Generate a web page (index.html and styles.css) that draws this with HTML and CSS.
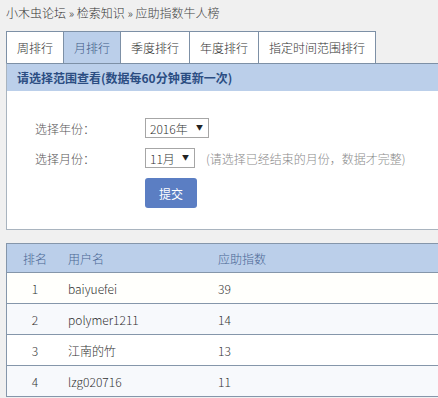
FILE: index.html
```html
<!DOCTYPE html>
<html lang="zh-CN">
<head>
    <meta charset="UTF-8">
    <meta name="viewport" content="width=device-width, initial-scale=1.0">
    <title>应助指数牛人榜</title>
    <link rel="stylesheet" href="styles.css">
</head>
<body>

    <div class="crumbs">
        <a href="#">小木虫论坛</a> » <a href="#">检索知识</a> » <span>应助指数牛人榜</span>
    </div>

    <div class="tabs">
        <div class="tab">周排行</div>
        <div class="tab active">月排行</div>
        <div class="tab">季度排行</div>
        <div class="tab">年度排行</div>
        <div class="tab">指定时间范围排行</div>
    </div>

    <div class="panel">
        <div class="panel-title">请选择范围查看(数据每60分钟更新一次)</div>
        <form class="range-form">
            <div class="form-row">
                <label class="form-label">选择年份：</label>
                <div class="select-wrap year">
                    <select>
                        <option>2016年</option>
                        <option>2015年</option>
                    </select>
                    <span class="caret">▼</span>
                </div>
            </div>
            <div class="form-row">
                <label class="form-label">选择月份：</label>
                <div class="select-wrap month">
                    <select>
                        <option>11月</option>
                        <option>10月</option>
                    </select>
                    <span class="caret">▼</span>
                </div>
                <span class="hint">(请选择已经结束的月份，数据才完整)</span>
            </div>
            <div class="form-row btn-row">
                <span class="form-label"></span>
                <button type="button" class="submit">提交</button>
            </div>
        </form>
    </div>

    <table class="rank">
        <thead>
            <tr>
                <th class="col-rank">排名</th>
                <th class="col-user">用户名</th>
                <th>应助指数</th>
            </tr>
        </thead>
        <tbody>
            <tr class="first">
                <td class="col-rank">1</td>
                <td class="col-user">baiyuefei</td>
                <td>39</td>
            </tr>
            <tr class="alt">
                <td class="col-rank">2</td>
                <td class="col-user">polymer1211</td>
                <td>14</td>
            </tr>
            <tr>
                <td class="col-rank">3</td>
                <td class="col-user">江南的竹</td>
                <td>13</td>
            </tr>
            <tr class="alt">
                <td class="col-rank">4</td>
                <td class="col-user">lzg020716</td>
                <td>11</td>
            </tr>
        </tbody>
    </table>

</body>
</html>
```

FILE: styles.css
```css
body {
    margin: 0;
    padding: 0 0 0 6px;
    background-color: #f0f0f0;
    font-family: "Noto Sans CJK SC", "Noto Sans", sans-serif;
    font-size: 12px;
    font-weight: 300;
    color: #333;
    overflow: hidden;
}
a {
    color: #333;
    text-decoration: none;
}
.crumbs {
    height: 26px;
    line-height: 26px;
    font-size: 12px;
    color: #444;
}
.tabs {
    display: flex;
    margin-top: 5px;
}
.tab {
    height: 31px;
    line-height: 31px;
    padding: 0 10px;
    background-color: #fff;
    border: 1px solid #7d90a6;
    border-bottom: none;
    margin-right: -1px;
    color: #333;
    font-size: 12px;
}
.tab.active {
    background-color: #bbcfea;
    color: #3d5a85;
}
.panel {
    margin-right: -20px;
    background-color: #fff;
    border: 1px solid #a9b4bf;
    border-top: 1px solid #7d90a6;
    border-right: none;
}
.panel-title {
    height: 27px;
    line-height: 27px;
    padding-left: 10px;
    background-color: #bbcfea;
    color: #2b4d82;
    font-weight: bold;
    font-size: 12px;
}
.range-form {
    padding: 22px 0 21px 28px;
}
.form-row {
    display: flex;
    align-items: center;
    height: 30px;
}
.form-row.btn-row {
    height: auto;
    padding-top: 5px;
}
.form-label {
    width: 110px;
    color: #555;
}
.select-wrap {
    position: relative;
    height: 20px;
}
.select-wrap select {
    appearance: none;
    -webkit-appearance: none;
    height: 20px;
    border: 1px solid #a6a6a6;
    border-radius: 0;
    background-color: #fff;
    font-family: "Noto Sans CJK SC", "Noto Sans", sans-serif;
    font-size: 12px;
    font-weight: 300;
    color: #333;
    padding: 0 0 0 4px;
    outline: none;
}
.select-wrap.year select {
    width: 64px;
}
.select-wrap.month select {
    width: 50px;
}
.caret {
    position: absolute;
    right: 6px;
    top: 4px;
    font-size: 7px;
    color: #222;
    pointer-events: none;
}
.hint {
    margin-left: 11px;
    color: #8a8a8a;
    font-size: 12px;
}
.submit {
    width: 52px;
    height: 30px;
    border: none;
    border-radius: 3px;
    background-color: #5b7ec3;
    color: #fff;
    font-family: "Noto Sans CJK SC", "Noto Sans", sans-serif;
    font-size: 12px;
    cursor: pointer;
}
.rank {
    margin-top: 13px;
    width: calc(100% + 20px);
    border-collapse: collapse;
    background-color: #fff;
    font-size: 12px;
}
.rank th,
.rank td {
    height: 30px;
    padding: 0 5px;
    text-align: left;
    border-top: 1px solid #8596aa;
    border-bottom: 1px solid #8596aa;
}
.rank th {
    background-color: #bbcfea;
    color: #4a6794;
    font-weight: 300;
    height: 28px;
}
.rank tr > :first-child {
    border-left: 1px solid #8596aa;
}
.rank .col-rank {
    width: 46px;
    text-align: center;
}
.rank .col-user {
    width: 140px;
}
.rank tr.first td {
    background-color: #fffffc;
}
.rank tr.alt td {
    background-color: #f7f9fc;
}
```
